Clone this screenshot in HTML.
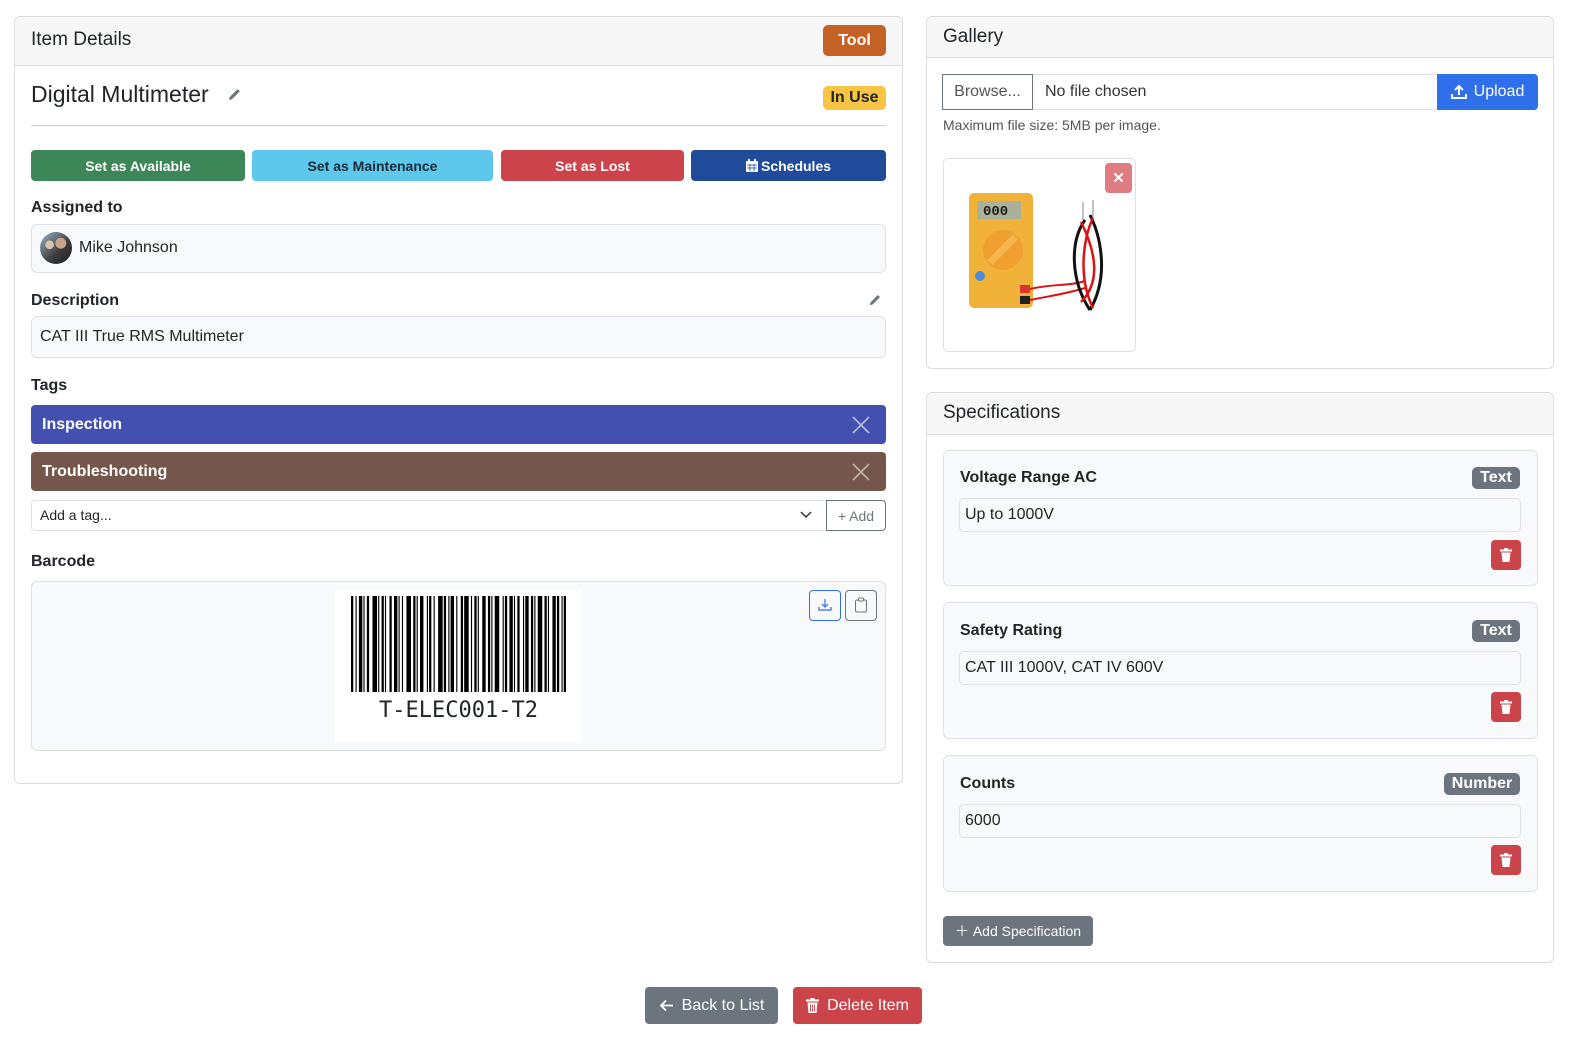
<!DOCTYPE html>
<html><head><meta charset="utf-8"><style>
*{box-sizing:border-box;margin:0;padding:0}
body{width:1590px;height:1048px;background:#fff;font-family:"Liberation Sans",sans-serif;color:#212529;position:relative;overflow:hidden;font-size:16px}
.a{position:absolute}
.card{position:absolute;border:1px solid #dcdcdc;border-radius:6px;background:#fff;overflow:hidden}
.hd{position:absolute;left:0;right:0;top:0;background:#f7f7f7;border-bottom:1px solid #dcdcdc}
.lbl{position:absolute;font-weight:bold;font-size:16px}
.box{position:absolute;background:#f8f9fa;border:1px solid #dee2e6;border-radius:6px}
.btn{position:absolute;border-radius:4px;color:#fff;font-weight:bold;font-size:14px;display:flex;align-items:center;justify-content:center}
.badge{position:absolute;border-radius:5px;font-weight:bold;color:#fff;display:flex;align-items:center;justify-content:center}
.tag{position:absolute;left:31px;width:855px;height:39px;border-radius:4px;color:#fff;font-weight:bold;font-size:16px;padding-left:11px;display:flex;align-items:center}
.trash{position:absolute;width:30px;height:30px;background:#cb444a;border-radius:4px;display:flex;align-items:center;justify-content:center}
</style></head><body>

<!-- Left card -->
<div class="card" style="left:14px;top:16px;width:889px;height:768px">
 <div class="hd" style="height:49px"></div>
</div>
<div class="a" style="left:31px;top:29px;font-size:19px">Item Details</div>
<div class="badge" style="left:823px;top:25px;width:63px;height:31px;background:#c46125;font-size:16px">Tool</div>

<div class="a" style="left:31px;top:81px;font-size:23px">Digital Multimeter</div>
<svg class="a" style="left:227px;top:88px" width="14" height="14" viewBox="0 0 16 16"><path d="M12.1 1.3l2.6 2.6-9 9-3.4.8.8-3.4z" fill="#6c757d"/></svg>
<div class="badge" style="left:823px;top:86px;width:63px;height:24px;background:#f7c543;color:#212529;font-size:16px">In Use</div>
<div class="a" style="left:31px;top:125px;width:855px;height:1px;background:#cfcfcf"></div>

<div class="btn" style="left:31px;top:150px;width:214px;height:31px;background:#3d8657">Set as Available</div>
<div class="btn" style="left:252px;top:150px;width:241px;height:31px;background:#5dc8ec;color:#1b2a33">Set as Maintenance</div>
<div class="btn" style="left:501px;top:150px;width:183px;height:31px;background:#cd434b">Set as Lost</div>
<div class="btn" style="left:691px;top:150px;width:195px;height:31px;background:#1f4b9a"><svg width="12" height="13" viewBox="0 0 12 13" style="margin-right:3px"><rect x="0" y="2" width="12" height="11" rx="1" fill="#fff"/><rect x="2" y="0" width="2" height="3" fill="#fff"/><rect x="8" y="0" width="2" height="3" fill="#fff"/><path d="M1 6h10M1 9h10M4 5v7M8 5v7" stroke="#1f4b9a" stroke-width=".8"/></svg>Schedules</div>

<div class="lbl" style="left:31px;top:199px">Assigned to</div>
<div class="box" style="left:31px;top:224px;width:855px;height:49px"></div>
<div class="a" style="left:40px;top:232px;width:32px;height:32px;border-radius:50%;background:radial-gradient(circle at 65% 35%,#c9a48a 0 18%,transparent 19%),radial-gradient(circle at 30% 40%,#d8c2a8 0 14%,transparent 15%),linear-gradient(135deg,#9fb8d0,#3a3a3a 60%,#222)"></div>
<div class="a" style="left:79px;top:239px">Mike Johnson</div>

<div class="lbl" style="left:31px;top:292px">Description</div>
<svg class="a" style="left:868px;top:294px" width="13" height="13" viewBox="0 0 16 16"><path d="M12.1 1.3l2.6 2.6-9 9-3.4.8.8-3.4z" fill="#6c757d"/></svg>
<div class="box" style="left:31px;top:316px;width:855px;height:42px"></div>
<div class="a" style="left:40px;top:328px">CAT III True RMS Multimeter</div>

<div class="lbl" style="left:31px;top:377px">Tags</div>
<div class="tag" style="top:405px;background:#4450b0">Inspection</div>
<svg class="a" style="left:852px;top:416px" width="18" height="18" viewBox="0 0 18 18"><path d="M1 1l16 16M17 1L1 17" stroke="#b8bde0" stroke-width="1.6"/></svg>
<div class="tag" style="top:452px;background:#74574a">Troubleshooting</div>
<svg class="a" style="left:852px;top:463px" width="18" height="18" viewBox="0 0 18 18"><path d="M1 1l16 16M17 1L1 17" stroke="#c2b1a9" stroke-width="1.6"/></svg>
<div class="a" style="left:31px;top:500px;width:796px;height:31px;border:1px solid #dee2e6;border-radius:4px 0 0 4px"></div>
<div class="a" style="left:40px;top:507px;font-size:14px">Add a tag...</div>
<svg class="a" style="left:800px;top:511px" width="12" height="8" viewBox="0 0 12 8"><path d="M1 1l5 5 5-5" stroke="#333" stroke-width="1.5" fill="none"/></svg>
<div class="a" style="left:826px;top:500px;width:60px;height:31px;border:1px solid #6c757d;border-radius:0 4px 4px 0;color:#6c757d;font-size:14px;display:flex;align-items:center;justify-content:center">+ Add</div>

<div class="lbl" style="left:31px;top:553px">Barcode</div>
<div class="box" style="left:31px;top:581px;width:855px;height:170px"></div>
<div class="a" style="left:335px;top:590px;width:247px;height:153px;background:#fff"></div>
<svg class="a" style="left:351px;top:596px" width="215" height="96" viewBox="0 0 190 96" preserveAspectRatio="none"><g fill="#000">
<rect x="0" width="2" height="96"/><rect x="4" width="1" height="96"/><rect x="7" width="3" height="96"/><rect x="11" width="1" height="96"/><rect x="14" width="2" height="96"/><rect x="19" width="4" height="96"/><rect x="24" width="1" height="96"/><rect x="27" width="2" height="96"/><rect x="30" width="1" height="96"/><rect x="34" width="2" height="96"/><rect x="38" width="3" height="96"/><rect x="42" width="1" height="96"/><rect x="45" width="1" height="96"/><rect x="49" width="4" height="96"/><rect x="55" width="2" height="96"/><rect x="58" width="1" height="96"/><rect x="61" width="3" height="96"/><rect x="67" width="1" height="96"/><rect x="69" width="2" height="96"/><rect x="73" width="1" height="96"/><rect x="77" width="4" height="96"/><rect x="82" width="2" height="96"/><rect x="86" width="1" height="96"/><rect x="88" width="3" height="96"/><rect x="93" width="1" height="96"/><rect x="97" width="2" height="96"/><rect x="100" width="4" height="96"/><rect x="106" width="1" height="96"/><rect x="109" width="2" height="96"/><rect x="112" width="1" height="96"/><rect x="116" width="3" height="96"/><rect x="121" width="2" height="96"/><rect x="124" width="1" height="96"/><rect x="127" width="4" height="96"/><rect x="134" width="1" height="96"/><rect x="136" width="2" height="96"/><rect x="140" width="3" height="96"/><rect x="144" width="1" height="96"/><rect x="147" width="2" height="96"/><rect x="152" width="1" height="96"/><rect x="154" width="3" height="96"/><rect x="159" width="2" height="96"/><rect x="162" width="1" height="96"/><rect x="165" width="4" height="96"/><rect x="171" width="2" height="96"/><rect x="174" width="1" height="96"/><rect x="178" width="3" height="96"/><rect x="182" width="2" height="96"/><rect x="186" width="1" height="96"/><rect x="188" width="2" height="96"/></g></svg>
<div class="a" style="left:335px;top:698px;width:247px;text-align:center;font-family:'DejaVu Sans Mono','Liberation Mono',monospace;font-size:22px">T-ELEC001-T2</div>
<div class="a" style="left:809px;top:590px;width:32px;height:31px;border:1px solid #2f6fea;border-radius:4px"></div>
<svg class="a" style="left:818px;top:598px" width="14" height="14" viewBox="0 0 14 14"><path d="M7 1v8M4 6l3 3 3-3M1 9v3h12V9" stroke="#2f6fea" stroke-width="1.2" fill="none"/></svg>
<div class="a" style="left:845px;top:590px;width:32px;height:31px;border:1px solid #6c757d;border-radius:4px"></div>
<svg class="a" style="left:854px;top:597px" width="14" height="16" viewBox="0 0 14 16"><rect x="1.5" y="3" width="11" height="12" rx="1.5" stroke="#6c757d" fill="none"/><rect x="4.5" y="1" width="5" height="3" rx="1" stroke="#6c757d" fill="#fff"/></svg>

<!-- Gallery card -->
<div class="card" style="left:926px;top:16px;width:628px;height:353px">
 <div class="hd" style="height:41px"></div>
</div>
<div class="a" style="left:943px;top:26px;font-size:19px">Gallery</div>
<div class="a" style="left:942px;top:74px;width:596px;height:36px;border:1px solid #dee2e6;border-radius:4px"></div>
<div class="a" style="left:942px;top:74px;width:91px;height:36px;border:1px solid #6c757d;color:#555;display:flex;align-items:center;justify-content:center">Browse...</div>
<div class="a" style="left:1045px;top:83px;color:#333">No file chosen</div>
<div class="a" style="left:1437px;top:74px;width:101px;height:36px;background:#2f6fea;border-radius:0 4px 4px 0;color:#fff;display:flex;align-items:center;justify-content:center"><svg width="16" height="16" viewBox="0 0 16 16" style="margin-right:7px"><path d="M8 11V2M4 6l4-4 4 4" stroke="#fff" stroke-width="2" fill="none"/><path d="M1 10v4h14v-4" stroke="#fff" stroke-width="2" fill="none"/></svg>Upload</div>
<div class="a" style="left:943px;top:117px;font-size:14px;color:#555">Maximum file size: 5MB per image.</div>
<div class="a" style="left:943px;top:158px;width:193px;height:194px;border:1px solid #dee2e6;border-radius:5px"></div>
<svg class="a" style="left:965px;top:190px" width="150" height="125" viewBox="0 0 150 125">
<rect x="4" y="3" width="64" height="115" rx="5" fill="#f1b23a"/>
<rect x="12" y="11" width="44" height="18" fill="#aab09a"/>
<text x="18" y="25" font-family="Liberation Mono" font-size="14" font-weight="bold" fill="#222">000</text>
<circle cx="38" cy="60" r="20" fill="#f0a030"/>
<rect x="20" y="56" width="36" height="7" transform="rotate(-45 38 60)" fill="#f6b84a"/>
<circle cx="15" cy="86" r="5" fill="#4d8dd0"/>
<rect x="55" y="95" width="10" height="8" fill="#d33"/><rect x="55" y="106" width="10" height="8" fill="#222"/>
<path d="M65 99c20 -5 40 -3 55 -8M65 110c25 -5 35 -6 55 -12" stroke="#d11" stroke-width="2" fill="none"/>
<path d="M120 30c-15 20 -15 60 5 90M125 25c10 20 20 60 0 95" stroke="#111" stroke-width="3" fill="none"/>
<path d="M128 28c-10 20 -15 60 0 90M116 32c15 30 20 60 0 80" stroke="#d11" stroke-width="2.5" fill="none"/>
<path d="M118 12v18M128 10v18" stroke="#999" stroke-width="1.2"/>
</svg>
<div class="a" style="left:1105px;top:163px;width:27px;height:30px;background:#de7c82;border-radius:4px;color:#fff;display:flex;align-items:center;justify-content:center;font-size:15px;font-weight:bold">✕</div>

<!-- Specs card -->
<div class="card" style="left:926px;top:392px;width:628px;height:571px">
 <div class="hd" style="height:42px"></div>
</div>
<div class="a" style="left:943px;top:402px;font-size:19px">Specifications</div>

<div class="box" style="left:943px;top:450px;width:595px;height:136px"></div>
<div class="lbl" style="left:960px;top:469px">Voltage Range AC</div>
<div class="badge" style="left:1472px;top:467px;width:48px;height:22px;background:#6c757d;font-size:16px">Text</div>
<div class="a" style="left:959px;top:498px;width:562px;height:34px;border:1px solid #dee2e6;border-radius:5px"></div>
<div class="a" style="left:965px;top:506px">Up to 1000V</div>
<div class="trash" style="left:1491px;top:540px"><svg width="12" height="14" viewBox="0 0 12 14"><rect x="0" y="1.5" width="12" height="2" fill="#fff"/><rect x="4" y="0" width="4" height="2" fill="#fff"/><path d="M1.5 4.5h9l-1 9.5h-7z" fill="#fff"/></svg></div>

<div class="box" style="left:943px;top:602px;width:595px;height:137px"></div>
<div class="lbl" style="left:960px;top:622px">Safety Rating</div>
<div class="badge" style="left:1472px;top:620px;width:48px;height:22px;background:#6c757d;font-size:16px">Text</div>
<div class="a" style="left:959px;top:651px;width:562px;height:34px;border:1px solid #dee2e6;border-radius:5px"></div>
<div class="a" style="left:965px;top:659px">CAT III 1000V, CAT IV 600V</div>
<div class="trash" style="left:1491px;top:692px"><svg width="12" height="14" viewBox="0 0 12 14"><rect x="0" y="1.5" width="12" height="2" fill="#fff"/><rect x="4" y="0" width="4" height="2" fill="#fff"/><path d="M1.5 4.5h9l-1 9.5h-7z" fill="#fff"/></svg></div>

<div class="box" style="left:943px;top:755px;width:595px;height:137px"></div>
<div class="lbl" style="left:960px;top:775px">Counts</div>
<div class="badge" style="left:1444px;top:773px;width:76px;height:22px;background:#6c757d;font-size:16px">Number</div>
<div class="a" style="left:959px;top:804px;width:562px;height:34px;border:1px solid #dee2e6;border-radius:5px"></div>
<div class="a" style="left:965px;top:812px">6000</div>
<div class="trash" style="left:1491px;top:845px"><svg width="12" height="14" viewBox="0 0 12 14"><rect x="0" y="1.5" width="12" height="2" fill="#fff"/><rect x="4" y="0" width="4" height="2" fill="#fff"/><path d="M1.5 4.5h9l-1 9.5h-7z" fill="#fff"/></svg></div>

<div class="a" style="left:943px;top:916px;width:150px;height:30px;background:#6c757d;border-radius:4px;color:#fff;font-size:14px;display:flex;align-items:center;justify-content:center">＋&nbsp;Add Specification</div>

<!-- bottom buttons -->
<div class="a" style="left:645px;top:987px;width:133px;height:37px;background:#6c757d;border-radius:4px;color:#fff;display:flex;align-items:center;justify-content:center"><svg width="15" height="13" viewBox="0 0 15 13" style="margin-right:8px"><path d="M14 6.5H2M7 1.5l-5 5 5 5" stroke="#fff" stroke-width="1.8" fill="none"/></svg>Back to List</div>
<div class="a" style="left:793px;top:987px;width:129px;height:37px;background:#cb444a;border-radius:4px;color:#fff;display:flex;align-items:center;justify-content:center"><svg width="13" height="15" viewBox="0 0 13 15" style="margin-right:8px"><rect x="0" y="1.5" width="13" height="2" fill="#fff"/><rect x="4.5" y="0" width="4" height="2" fill="#fff"/><path d="M1.5 4.5h10l-1 10.5h-8z" fill="#fff"/><path d="M4.5 6.5v7M6.5 6.5v7M8.5 6.5v7" stroke="#cb444a" stroke-width=".9"/></svg>Delete Item</div>

</body></html>
